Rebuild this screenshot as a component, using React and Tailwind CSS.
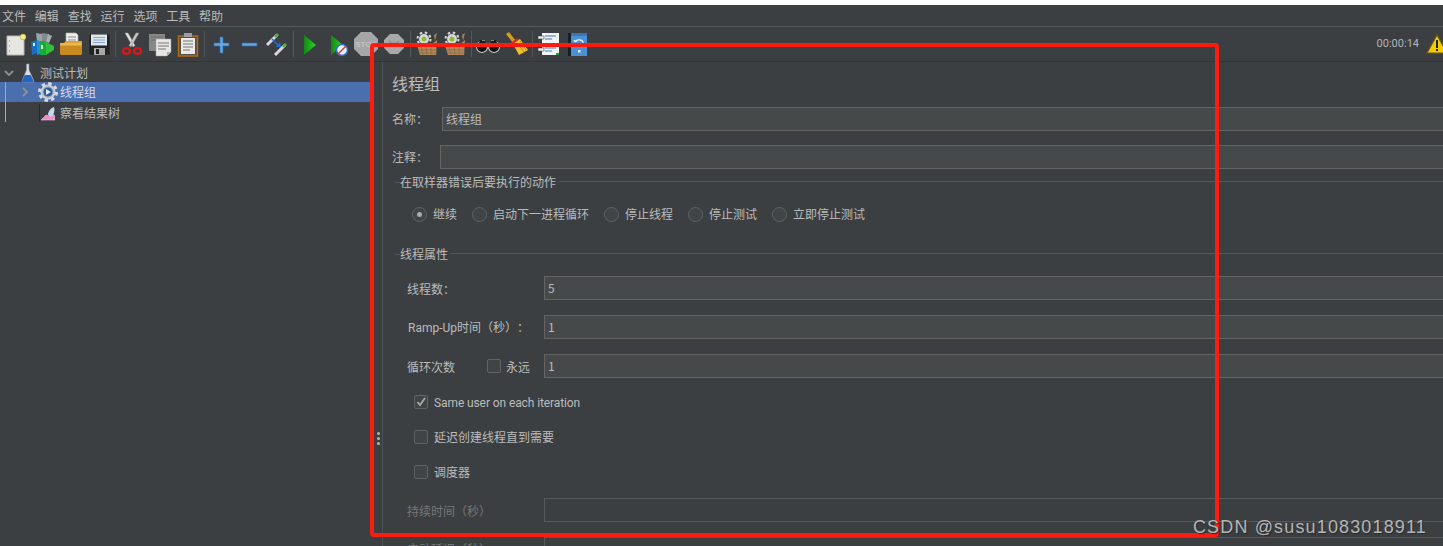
import React from "react";

const Sep = () => (
  <div className="w-[5px] h-[26px] flex justify-center shrink-0">
    <div className="w-px h-full bg-[#55585a]" />
  </div>
);

const Ico = ({ children }) => (
  <div className="w-[28px] h-[34px] flex items-center justify-center shrink-0">
    <svg width="26" height="26" viewBox="0 0 26 26">{children}</svg>
  </div>
);

const NewIcon = () => (
  <Ico>
    <path d="M5 5h17v19H5z" fill="#e6e6e2" stroke="#b9b9b2" />
    <circle cx="7.5" cy="10" r=".7" fill="#999" /><circle cx="7.5" cy="15" r=".7" fill="#999" /><circle cx="7.5" cy="20" r=".7" fill="#999" />
    <circle cx="21" cy="6" r="2.8" fill="#f6ee8a" stroke="#cdbd4a" />
  </Ico>
);
const TemplatesIcon = () => (
  <Ico>
    <path d="M6 2l6 1 1 7-6 1z" fill="#9aa3a5" /><path d="M12 2l7 1-2 8-5-1z" fill="#808b8e" /><path d="M18 3l4 2-3 7-3-1z" fill="#a7aeb0" />
    <path d="M1 11l6-2v13l-5 2z" fill="#1c6fc0" /><path d="M7 9l3 1v13l-3 1z" fill="#1d93dd" />
    <path d="M10 10h6v14h-6z" fill="#1ea83c" /><path d="M16 11l8 4v4l-8 5z" fill="#2fbf3a" />
    <path d="M3 12h2v3H3z" fill="#dfeefa" /><path d="M11 14h2v4h-2z" fill="#bff0c8" />
  </Ico>
);
const OpenIcon = () => (
  <Ico>
    <path d="M8 2h10l2 2v10H8z" fill="#eeeeea" stroke="#aaa" strokeWidth=".7" />
    <path d="M10 6h8M10 9h8" stroke="#888" strokeWidth="1" />
    <path d="M2 12h4l2-2h16v12c0 1-1 2-2 2H4c-1 0-2-1-2-2z" fill="#e2a32e" />
    <path d="M2 15h22v7c0 1-1 2-2 2H4c-1 0-2-1-2-2z" fill="#c98b1d" />
    <path d="M3 13h20" stroke="#f2cb75" />
  </Ico>
);
const SaveIcon = () => (
  <Ico>
    <path d="M3 3h19l2 2v19H3z" fill="#232323" stroke="#444" strokeWidth=".6" />
    <path d="M5 3.500h16v11H5z" fill="#dfe7f1" /><path d="M7 6.500h12M7 9h12M7 11.500h12" stroke="#8ba6c8" strokeWidth="1" />
    <path d="M8 17h11v7H8z" fill="#a9a9a9" /><path d="M10 18h3v5h-3z" fill="#222" />
  </Ico>
);
const CutIcon = () => (
  <Ico>
    <path d="M6 2l8 14 2-1.500L9 2z" fill="#e3e3e3" stroke="#999" strokeWidth=".5" />
    <path d="M20 2l-8 14-2-1.500L17 2z" fill="#c9c9c9" stroke="#888" strokeWidth=".5" />
    <ellipse cx="7.500" cy="20" rx="3.600" ry="3" fill="none" stroke="#d4181b" strokeWidth="2.400" />
    <ellipse cx="18.500" cy="20" rx="3.600" ry="3" fill="none" stroke="#d4181b" strokeWidth="2.400" />
  </Ico>
);
const CopyIcon = () => (
  <Ico>
    <path d="M2 3h16v17H2z" fill="#858789" />
    <path d="M4 6h12M4 9h10" stroke="#6c6e70" />
    <path d="M9 8h15v13l-4 4H9z" fill="#e7e7e5" stroke="#a0a0a0" strokeWidth=".5" />
    <path d="M11 12h11M11 15h11M11 18h8" stroke="#777" />
    <path d="M20 25v-4h4z" fill="#aaa" />
  </Ico>
);
const PasteIcon = () => (
  <Ico>
    <path d="M3.500 5h19v20h-19z" fill="#5a5048" stroke="#b26c16" strokeWidth="1.500" />
    <path d="M6 7h14v16H6z" fill="#e9e9e6" />
    <path d="M9 2h8v4H9z" fill="#9d9d9d" />
    <path d="M8 10h10M8 13h10M8 16h10M8 19h7" stroke="#777" />
  </Ico>
);
const PlusIcon = () => (
  <Ico>
    <path d="M12 6h3v6h6v3h-6v7h-3v-7H6v-3h6z" fill="#6aa7de" stroke="#2a6fb8" strokeWidth=".7" />
  </Ico>
);
const MinusIcon = () => (
  <Ico>
    <path d="M6 12h15v3H6z" fill="#6aa7de" stroke="#2a6fb8" strokeWidth=".7" />
  </Ico>
);
const ToggleIcon = () => (
  <Ico>
    <path d="M3 14L13 4" stroke="#d8d8d8" strokeWidth="3" /><path d="M11 6l3-3" stroke="#58a84a" strokeWidth="3" />
    <path d="M11 24l10-10" stroke="#d8d8d8" strokeWidth="3" /><path d="M19 16l3-3" stroke="#58a84a" strokeWidth="3" />
    <path d="M8 8l7 7" stroke="#1f6fd0" strokeWidth="1.500" /><path d="M12 16l5 0-1-5z" fill="#1f6fd0" />
  </Ico>
);
const startGrad = (id) => (
  <defs>
    <linearGradient id={id} x1="0" y1="0" x2="1" y2="0">
      <stop offset="0" stopColor="#0f8a12" /><stop offset="1" stopColor="#2fd02a" />
    </linearGradient>
  </defs>
);
const StartIcon = () => (
  <Ico>
    {startGrad("g1")}
    <path d="M7 4l12 10L7 24z" fill="url(#g1)" />
  </Ico>
);
const StartNoIcon = () => (
  <Ico>
    {startGrad("g2")}
    <path d="M6 4l12 10L6 24z" fill="url(#g2)" />
    <circle cx="17" cy="19" r="5.500" fill="#eaf2fb" stroke="#2f6fc0" strokeWidth="1.500" />
    <path d="M13 23l8-8" stroke="#d8322c" strokeWidth="1.500" />
  </Ico>
);
const StopIcon = () => (
  <div className="w-[28px] h-[34px] flex items-center justify-center shrink-0">
    <svg width="24" height="24" viewBox="0 0 24 24">
      <path d="M7 0h10l7 7v10l-7 7H7l-7-7V7z" fill="#a6a6a6" />
      <text x="12" y="15" textAnchor="middle" fontSize="8" fontWeight="700" fill="#c2c2c2" fontFamily="'Liberation Sans', sans-serif">STOP</text>
    </svg>
  </div>
);
const ShutIcon = () => (
  <div className="w-[28px] h-[34px] flex items-center justify-center shrink-0">
    <svg width="20" height="20" viewBox="0 0 20 20">
      <path d="M6 0h8l6 6v8l-6 6H6l-6-6V6z" fill="#a8a8a8" />
      <path d="M5 7l5 4 5-4M5 13l5-4 5 4" stroke="#8c8c8c" fill="none" strokeWidth="1.500" />
    </svg>
  </div>
);
const ClearIcon = () => (
  <Ico>
    <circle cx="10" cy="8" r="5" fill="#d9d9d9" />
    <circle cx="10" cy="8" r="6.500" fill="none" stroke="#d9d9d9" strokeWidth="2" strokeDasharray="2.500 2.600" />
    <circle cx="10" cy="8" r="2.500" fill="#8dbb3a" />
    <path d="M20 4l3-2-2 8z" fill="#a5855c" />
    <path d="M3 14l7 2 8-3 5-4-1 15H6z" fill="#b1895c" />
    <path d="M7 16l2 8M12 16l1 8M17 14v10M5 19h18M5 22h18" stroke="#8a6a44" strokeWidth=".8" />
  </Ico>
);
const SearchIcon = () => (
  <Ico>
    <circle cx="7" cy="16" r="5.500" fill="#111" stroke="#c9c9c9" strokeWidth="1.200" />
    <circle cx="19" cy="16" r="5.500" fill="#111" stroke="#c9c9c9" strokeWidth="1.200" />
    <path d="M5 9h5l1 3h4l1-3h5l2 6H3z" fill="#1c1c1c" />
    <path d="M7 9.500h3M16 9.500h3" stroke="#888" />
  </Ico>
);
const BroomIcon = () => (
  <Ico>
    <path d="M3 3l3-2 7 9-3 2z" fill="#d59a1e" />
    <path d="M8 12l6-5 3 2-6 6z" fill="#d8232a" />
    <path d="M10 13l7-5 8 11-9 5z" fill="#eec02c" />
    <path d="M14 12l7 9M17 10l6 9" stroke="#c0911a" />
  </Ico>
);
const ListIcon = () => (
  <Ico>
    <path d="M6 2h17v10H6zM6 14h17v10H6z" fill="#f1f3f5" />
    <path d="M9 5h11M9 8h7M9 17h11M9 20h7" stroke="#3d7fcc" strokeWidth="1.200" />
    <path d="M2 5h6v3H2zM2 17h6v3H2z" fill="#eeeeee" stroke="#333" strokeWidth=".5" />
    <path d="M20 22h3v2h-3z" fill="#1f9a34" />
  </Ico>
);
const HelpIcon = () => (
  <Ico>
    <path d="M4 2h4v23H4z" fill="#15202b" />
    <path d="M7 2h16v23H7z" fill="#4d90d6" />
    <path d="M7 2h16v3H7z" fill="#3a76b4" />
    <path d="M11 11c1-3 8-3 8 1 0 2-2 3-4 3M11 11l-1-2M11 11l2-1" stroke="#e8f1fa" strokeWidth="1.300" fill="none" />
    <rect x="14" y="19" width="2.500" height="2.500" fill="#e8f1fa" />
  </Ico>
);
const Warn = () => (
  <svg width="22" height="20" viewBox="0 0 22 20" className="shrink-0">
    <path d="M11 1l10 18H1z" fill="#f3cc00" stroke="#6e5a10" strokeWidth="1.200" />
    <path d="M10 6h2v8h-2z" fill="#222" /><path d="M10 15h2v2h-2z" fill="#222" />
  </svg>
);

const Chevron = ({ down }) => (
  <svg width="10" height="10" viewBox="0 0 10 10">
    <path d={down ? "M1 3l4 4 4-4" : "M3 1l4 4-4 4"} stroke="#8f9294" strokeWidth="1.800" fill="none" />
  </svg>
);
const Flask = () => (
  <svg width="14" height="20" viewBox="0 0 14 20">
    <path d="M5.500 1h2.500v6l5 11c0 1-1 1-1 1H2s-1 0-1-1L5.500 7z" fill="#d6dde6" stroke="#8d9aa8" strokeWidth=".6" />
    <path d="M3.800 12h5.800l3 6c0 1-1 1-1 1H2s-1 0-1-1z" fill="#1f66c4" />
  </svg>
);
const Gear = () => (
  <svg width="20" height="20" viewBox="0 0 20 20">
    <circle cx="10" cy="10" r="7.500" fill="#c9cdd0" />
    <circle cx="10" cy="10" r="8.500" fill="none" stroke="#d8dbdd" strokeWidth="3" strokeDasharray="3.400 3.270" />
    <circle cx="10" cy="10" r="5" fill="#2d5d9a" stroke="#8ea6c4" strokeWidth="1" />
    <path d="M8 7l5 3-5 3z" fill="#dfe9f5" />
  </svg>
);
const Chart = () => (
  <svg width="17" height="20" viewBox="0 0 17 20">
    <path d="M1.500 1v18" stroke="#26292a" />
    <path d="M3 17l5-5 3 1 3-3 3 3v4z" fill="#ee8fc8" stroke="#f8c3e4" strokeWidth=".6" />
    <path d="M10 12c0-4 3-7 6-8 1 3 0 8-3 10z" fill="#c3d7ee" />
  </svg>
);

const Radio = ({ checked, label }) => (
  <div className="flex items-center gap-[6px]">
    <span className="w-[15px] h-[15px] rounded-full border border-[#5f6365] bg-[#404445] flex items-center justify-center">
      {checked && <span className="w-[5px] h-[5px] rounded-full bg-[#aaaaaa]" />}
    </span>
    <span>{label}</span>
  </div>
);

const Check = ({ checked }) => (
  <span className="w-[14px] h-[14px] rounded-[2px] border border-[#5f6365] bg-[#404445] flex items-center justify-center shrink-0">
    {checked && (
      <svg width="10" height="10" viewBox="0 0 10 10">
        <path d="M1.500 5l2.500 3 5-7" stroke="#aaaaaa" strokeWidth="1.800" fill="none" />
      </svg>
    )}
  </span>
);

const Field = ({ value, dim, className }) => (
  <div className={"h-[24px] flex-1 border flex items-center pl-[3px] mr-[-20px] " + (dim ? "border-[#565a5c] bg-[#3c3f41] " : "border-[#646464] bg-[#45494a] ") + (className || "")}>
    {value}
  </div>
);

const Legend = ({ title, className }) => (
  <div className={"h-[14px] flex items-center ml-[12px] " + (className || "")}>
    <div className="w-[5px] h-px bg-[#555759]" />
    <span className="whitespace-nowrap">{title}</span>
    <div className="flex-1 ml-[3px] mt-[-2px] h-px bg-[#555759]" />
  </div>
);

export default function App() {
  const menus = ["文件", "编辑", "查找", "运行", "选项", "工具", "帮助"];
  return (
    <div className="relative w-[1443px] h-[546px] overflow-hidden bg-[#3c3f41] text-[#bbbbbb] text-[12px] leading-[14px] [text-spacing-trim:space-all] font-['Noto_Sans_CJK_SC','Noto_Sans',sans-serif]">
      <div className="h-[5px] bg-white" />
      <div className="h-[22px] flex items-center pl-[2px] gap-[8.830px] border-b border-[#55585a]">
        {menus.map((m) => (
          <span key={m}>{m}</span>
        ))}
      </div>
      <div className="h-[35px] flex items-center pl-[1px] border-b border-[#323435]">
        <NewIcon /><TemplatesIcon /><OpenIcon /><SaveIcon /><Sep />
        <CutIcon /><CopyIcon /><PasteIcon /><Sep />
        <PlusIcon /><MinusIcon /><ToggleIcon /><Sep />
        <StartIcon /><StartNoIcon /><StopIcon /><ShutIcon /><Sep />
        <ClearIcon /><ClearIcon /><Sep />
        <SearchIcon /><BroomIcon /><Sep />
        <ListIcon /><HelpIcon />
        <div className="flex-1" />
        <span className="text-[11px] text-[#b0b4b8] font-['Roboto',sans-serif] mr-[7px]">00:00:14</span>
        <div className="w-[17px] overflow-hidden"><Warn /></div>
      </div>

      <div className="flex h-[484px] overflow-hidden">
        <div className="relative w-[370px] shrink-0">
          <div className="absolute left-[5px] top-[20px] w-px h-[40px] bg-[#7fb2e5]" />
          <div className="h-[20px] flex items-center pl-[4px] pt-[2px]">
            <Chevron down />
            <span className="w-[7px]" />
            <Flask />
            <span className="ml-[5px]">测试计划</span>
          </div>
          <div className="h-[20px] flex items-center pl-[20px] bg-[#4b6eaf] text-[#d6dce8]">
            <Chevron />
            <span className="w-[8px]" />
            <Gear />
            <span className="ml-[2px]">线程组</span>
          </div>
          <div className="h-[20px] flex items-center pl-[38px] mt-px">
            <Chart />
            <span className="ml-[5px]">察看结果树</span>
          </div>
        </div>

        <div className="w-[12px] shrink-0 relative">
          <div className="absolute left-[7px] top-[370px] flex flex-col gap-[2px]">
            <span className="w-[3px] h-[3px] rounded-full bg-[#b5b5b5]" />
            <span className="w-[3px] h-[3px] rounded-full bg-[#b5b5b5]" />
            <span className="w-[3px] h-[3px] rounded-full bg-[#b5b5b5]" />
          </div>
        </div>

        <div className="flex-1 border-l border-[#4f5254] min-w-0 pb-[40px]">
          <div className="h-[45px] flex items-center pl-[9px] pb-[4px] text-[16px]">线程组</div>
          <div className="flex items-center pl-[9px]">
            <span className="w-[50px]">名称：</span>
            <Field value="线程组" />
          </div>
          <div className="flex items-center pl-[9px] mt-[14px]">
            <span className="w-[48px]">注释：</span>
            <Field />
          </div>
          <Legend title="在取样器错误后要执行的动作" className="mt-[6px]" />
          <div className="h-[20px] flex items-center gap-[15px] pl-[29px] mt-[15px]">
            <Radio checked label="继续" />
            <Radio label="启动下一进程循环" />
            <Radio label="停止线程" />
            <Radio label="停止测试" />
            <Radio label="立即停止测试" />
          </div>
          <Legend title="线程属性" className="mt-[23px]" />
          <div className="flex items-center pl-[24px] mt-[15px]">
            <span className="w-[137px] pt-px">线程数：</span>
            <Field value="5" />
          </div>
          <div className="flex items-center pl-[25px] mt-[15px]">
            <span className="w-[136px] pt-[2px] font-['Roboto','Noto_Sans_CJK_SC',sans-serif]">Ramp-Up时间（秒）：</span>
            <Field value="1" />
          </div>
          <div className="flex items-center pl-[24px] mt-[15px]">
            <span className="w-[80px] pt-px">循环次数</span>
            <Check />
            <span className="w-[43px] pl-[5px] pt-px">永远</span>
            <Field value="1" />
          </div>
          <div className="h-[20px] flex items-center gap-[6px] pl-[31px] mt-[14px]">
            <Check checked />
            <span className="pt-px font-['Roboto',sans-serif] tracking-[-0.1px]">Same user on each iteration</span>
          </div>
          <div className="h-[20px] flex items-center gap-[6px] pl-[31px] mt-[15px]">
            <Check />
            <span>延迟创建线程直到需要</span>
          </div>
          <div className="h-[20px] flex items-center gap-[6px] pl-[31px] mt-[15px]">
            <Check />
            <span>调度器</span>
          </div>
          <div className="flex items-center pl-[24px] mt-[16px] text-[#777777]">
            <span className="w-[137px] pt-px">持续时间（秒）</span>
            <Field dim />
          </div>
          <div className="flex items-center pl-[24px] mt-[15px] text-[#777777]">
            <span className="w-[137px]">启动延迟（秒）</span>
            <Field dim />
          </div>
        </div>
      </div>

      <div className="absolute left-[370px] top-[43px] w-[849px] h-[494px] border-[4px] border-[#fe1c10] rounded-[4px]" />
      <div className="absolute right-[16px] top-[516px] text-[18px] leading-[22px] text-[#b4b6b7] font-['Liberation_Sans',sans-serif] tracking-[1.150px] [text-shadow:1px_1px_1px_#2a2a2a]">
        CSDN @susu1083018911
      </div>
    </div>
  );
}
